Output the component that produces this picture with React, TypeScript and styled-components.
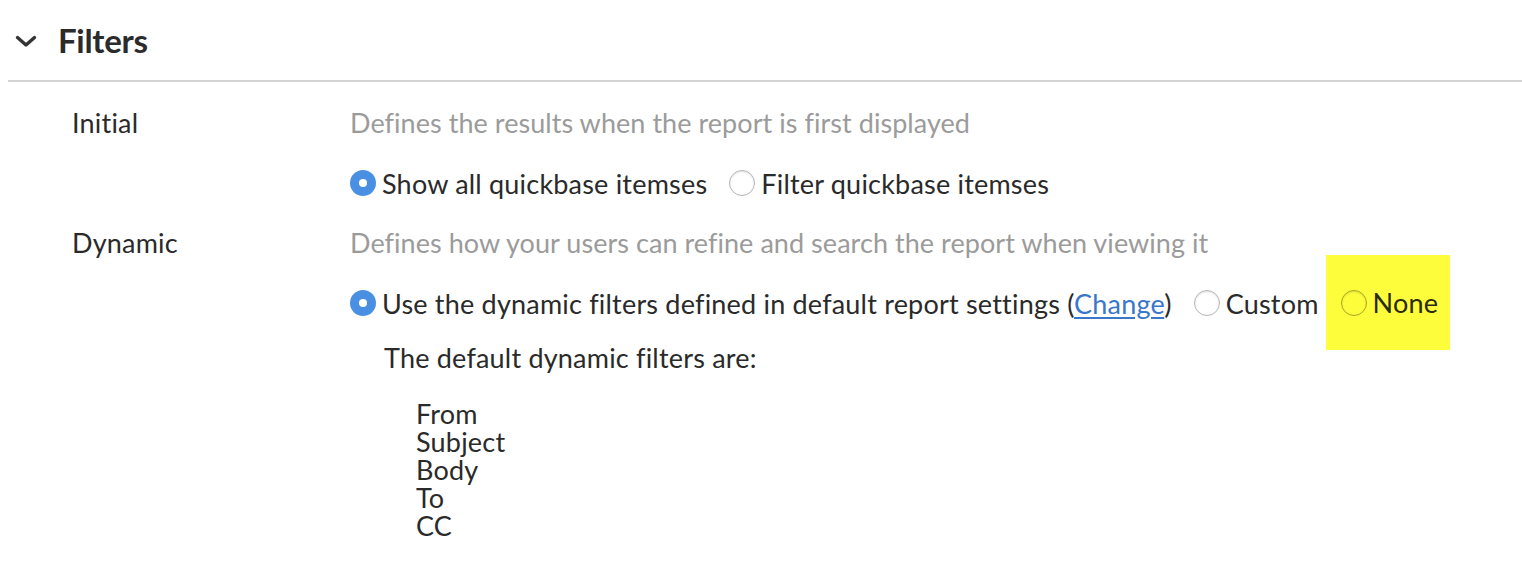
import styled, { createGlobalStyle } from 'styled-components';

const GlobalStyle = createGlobalStyle`
    body {
        margin: 0;
        background: #ffffff;
        font-family: Lato, 'Noto Sans', sans-serif;
        color: #2a2a2a;
    }
`;

const FILTER_FIELDS = ['From', 'Subject', 'Body', 'To', 'CC'];

type RadioProps = { checked?: boolean; highlight?: boolean; children: React.ReactNode };

const RadioOption = ({ checked, highlight, children }: RadioProps) => (
    <Option $highlight={highlight}>
        <Radio $checked={checked} $highlight={highlight} />
        <span>{children}</span>
    </Option>
);

const Filters = () => {
    return (
        <Section>
            <Header>
                <Chevron viewBox="0 0 22 13">
                    <path d="M2.5 2.5 L11 10 L19.5 2.5" fill="none" stroke="#333" strokeWidth="3.4" strokeLinecap="round" strokeLinejoin="round" />
                </Chevron>
                <Title>Filters</Title>
            </Header>
            <Body>
                <Row>
                    <Label>Initial</Label>
                    <Content>
                        <Desc>Defines the results when the report is first displayed</Desc>
                        <Options>
                            <RadioOption checked>Show all quickbase itemses</RadioOption>
                            <RadioOption>Filter quickbase itemses</RadioOption>
                        </Options>
                    </Content>
                </Row>
                <Row>
                    <Label>Dynamic</Label>
                    <Content>
                        <Desc>Defines how your users can refine and search the report when viewing it</Desc>
                        <Options>
                            <RadioOption checked>
                                Use the dynamic filters defined in default report settings (<Link href="#">Change</Link>)
                            </RadioOption>
                            <RadioOption>Custom</RadioOption>
                            <RadioOption highlight>None</RadioOption>
                        </Options>
                        <Defaults>
                            <Note>The default dynamic filters are:</Note>
                            <FieldList>
                                {FILTER_FIELDS.map((f) => (
                                    <li key={f}>{f}</li>
                                ))}
                            </FieldList>
                        </Defaults>
                    </Content>
                </Row>
            </Body>
        </Section>
    );
};

export default function App() {
    return (
        <>
            <GlobalStyle />
            <Filters />
        </>
    );
}

const Section = styled.section`
    padding-left: 8px;
`;

const Header = styled.div`
    display: flex;
    align-items: center;
    height: 80px;
    border-bottom: 2px solid #d4d4d4;
    padding-left: 7px;
    gap: 21px;
`;

const Chevron = styled.svg`
    width: 22px;
    height: 13px;
    margin-top: 3px;
`;

const Title = styled.h2`
    margin: 0;
    font-size: 33px;
    font-weight: 700;
    color: #2b2b2b;
    letter-spacing: -0.3px;
`;

const Body = styled.div`
    display: flex;
    flex-direction: column;
    padding: 11px 0 0 64px;
    font-size: 27px;
    letter-spacing: 0.2px;
`;

const Row = styled.div`
    display: grid;
    grid-template-columns: 278px 1fr;
    align-items: start;
`;

const Label = styled.div`
    line-height: 60px;
    color: #2a2a2a;
`;

const Content = styled.div`
    display: flex;
    flex-direction: column;
`;

const Desc = styled.div`
    line-height: 60px;
    color: #9b9b9b;
    white-space: nowrap;
    letter-spacing: 0.05px;
`;

const Options = styled.div`
    display: flex;
    align-items: center;
    height: 60px;
    gap: 22px;
`;

const Option = styled.span<{ $highlight?: boolean }>`
    display: inline-flex;
    align-items: center;
    gap: 6px;
    white-space: nowrap;
    ${({ $highlight }) =>
        $highlight &&
        `
        align-self: stretch;
        background: #fdfd3c;
        padding: 0 12px 0 15px;
        margin: -18px 0 -17px -15px;
        color: #2a2a10;
    `}
`;

const Radio = styled.span<{ $checked?: boolean; $highlight?: boolean }>`
    position: relative;
    width: 26px;
    height: 26px;
    border-radius: 50%;
    box-sizing: border-box;
    flex-shrink: 0;
    background: ${({ $checked }) => ($checked ? '#4a90e2' : 'transparent')};
    border: ${({ $checked, $highlight }) =>
        $checked ? 'none' : $highlight ? '1px solid #a8a820' : '1px solid #b5b5b5'};
    box-shadow: ${({ $checked }) => ($checked ? 'none' : 'inset 0 1px 2px rgba(0,0,0,0.12)')};
    &::after {
        content: '';
        display: ${({ $checked }) => ($checked ? 'block' : 'none')};
        position: absolute;
        left: 50%;
        top: 50%;
        width: 8px;
        height: 8px;
        margin: -4px 0 0 -4px;
        border-radius: 50%;
        background: #ffffff;
    }
`;

const Link = styled.a`
    color: #3a76c9;
    text-decoration: underline;
    text-underline-offset: 3px;
`;

const Defaults = styled.div`
    padding: 10px 0 0 34px;
`;

const Note = styled.div`
    line-height: 30px;
`;

const FieldList = styled.ul`
    list-style: none;
    margin: 27px 0 0;
    padding: 0 0 0 32px;
    line-height: 28px;
`;
